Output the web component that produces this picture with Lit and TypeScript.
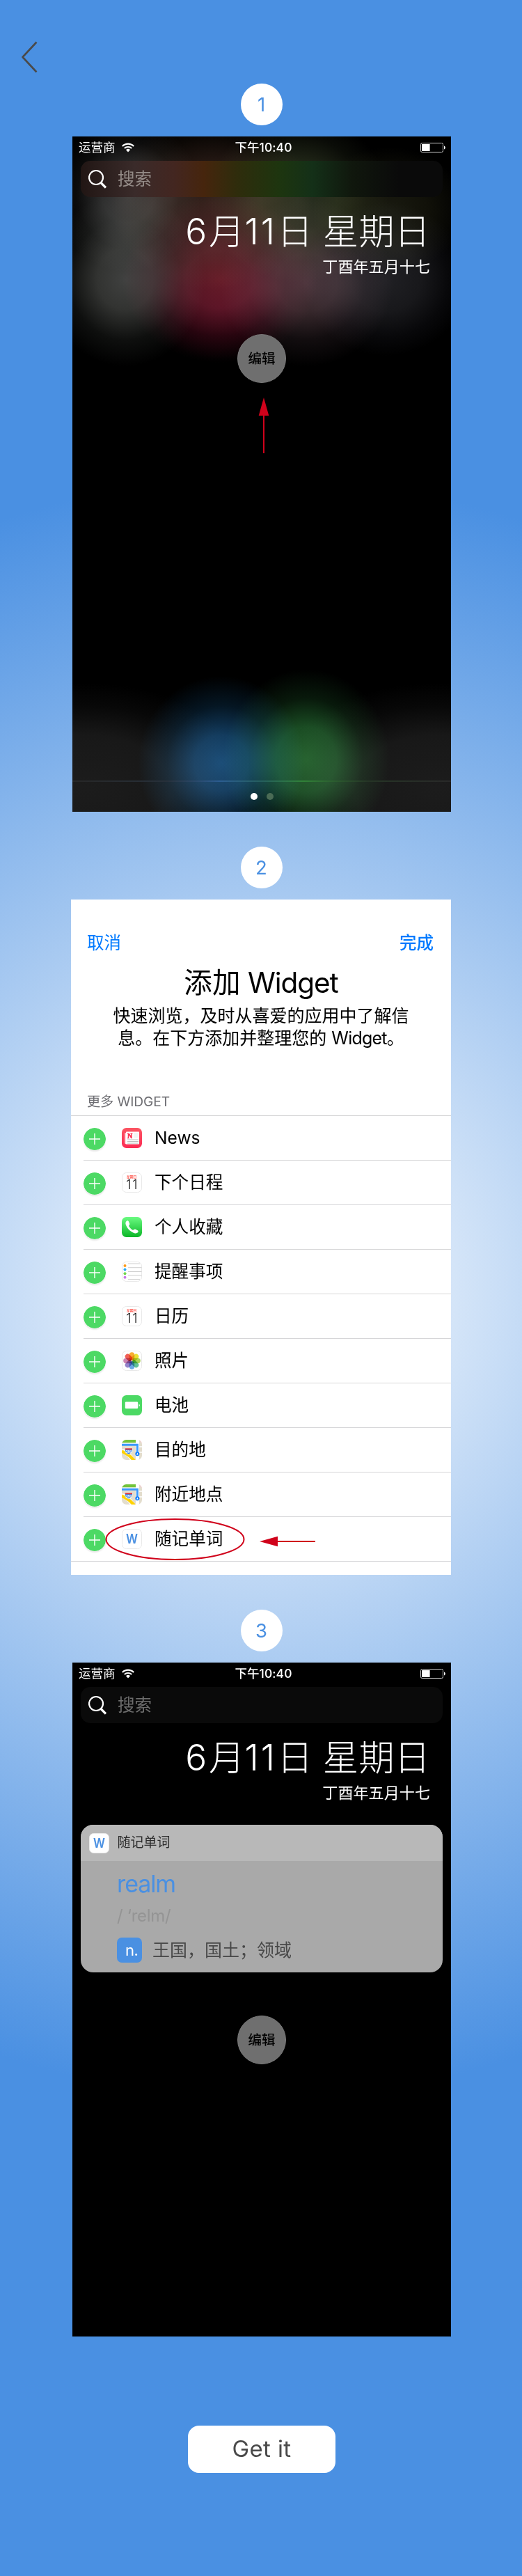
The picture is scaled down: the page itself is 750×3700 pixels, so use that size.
import { LitElement, html, css, svg, nothing } from "lit";
import { customElement, property } from "lit/decorators.js";

const textBase = css`
  :host {
    display: block;
    font-family: Inter, "Noto Sans CJK SC", sans-serif;
    box-sizing: border-box;
  }
  * {
    box-sizing: border-box;
  }
  svg {
    display: block;
    flex: none;
  }
`;

const calendarIcon = svg`
  <rect x=".5" y=".5" width="28" height="28" rx="6" fill="#fff" stroke="#e9e9e9"/>
  <text x="14.2" y="8.4" font-size="4.8" font-weight="500" text-anchor="middle" fill="#ff3b30" font-family="Noto Sans CJK SC, sans-serif">星期日</text>
  <text x="6.2" y="23.500" font-size="18.400" font-weight="300" textLength="16.200" fill="#111" font-family="Inter, sans-serif">11</text>`;

const mapIcon = svg`
  <clipPath id="tile"><rect width="29" height="29" rx="6.5"/></clipPath>
  <g clip-path="url(#tile)">
    <rect width="29" height="29" fill="#e3ddcd"/>
    <path d="M0 0h20v4.6H0z" fill="#72c43c"/>
    <path d="M20 0h5v29h-5z" fill="#fff"/>
    <path d="M25 0h4v5.5z" fill="#fbb8cc"/>
    <path d="M25 10h4M25 18h4" stroke="#fff" stroke-width="1.4"/>
    <path d="M0 4.6h24.5V6H0z" fill="#fff"/>
    <path d="M0 16c6 1.500 9 5 12 8l4 6" fill="none" stroke="#fff" stroke-width="6"/>
    <path d="M0 16.500c5 2 8 4.500 11.500 7L18 30" fill="none" stroke="#ffd200" stroke-width="4.400"/>
    <path d="M0 7.200h22.400V19" fill="none" stroke="#3b99fc" stroke-width="3"/>
    <path d="M4.600 12.400h10.600c.6 4-1 7-5.300 8.400-4.300-1.400-6-4.400-5.300-8.400z" fill="#2f7fe0" stroke="#fff" stroke-width=".8"/>
    <path d="M4.800 12.200h10.200v2H4.800z" fill="#e0393e"/>
    <text x="9.900" y="18.600" font-size="4.600" font-weight="700" text-anchor="middle" fill="#fff" font-family="Inter, sans-serif">280</text>
    <circle cx="22.400" cy="20.300" r="3" fill="#0a7bff"/>
    <path d="M22.400 18.500l1.300 3h-2.600z" fill="#fff"/>
  </g>`;

const petals = [
  ["#f7a21b", 0], ["#e8dd1c", 45], ["#a4cf46", 90], ["#4fb98c", 135],
  ["#5a9fe0", 180], ["#8a75c4", 225], ["#c877a9", 270], ["#ef4f45", 315],
] as const;

const wordIcon = svg`
  <rect x=".5" y=".5" width="28" height="28" rx="6" fill="#fff" stroke="#e9e9e9"/>
  <text x="6" y="20.700" font-size="19" font-weight="600" textLength="17" lengthAdjust="spacingAndGlyphs" fill="#4a90e2" font-family="Inter, sans-serif">W</text>`;

const icons: Record<string, unknown> = {
  news: svg`
    <defs><linearGradient id="nw" x2="0" y2="1"><stop stop-color="#fb5562"/><stop offset="1" stop-color="#fc2b53"/></linearGradient></defs>
    <rect width="29" height="29" rx="6.500" fill="url(#nw)"/>
    <path d="M4.300 7.200h3v16h-1.200c-1 0-1.800-.8-1.800-1.800z" fill="#ffdfe2"/>
    <rect x="6" y="5.500" width="19" height="18" rx=".8" fill="#fff"/>
    <text x="8" y="15.200" font-size="10" font-weight="900" fill="#fb2f50" stroke="#fb2f50" stroke-width=".6" font-family="Liberation Serif, serif">N</text>
    <path d="M17 7h7v7.500h-7z" fill="#f4f4f4"/>
    <path d="M8 17h16M8 19.500h16M8 22h16" stroke="#bdbdbd" stroke-width="1.100"/>`,
  calendar: calendarIcon,
  phone: svg`
    <defs><linearGradient id="ph" x2="0" y2="1"><stop stop-color="#6bfb82"/><stop offset="1" stop-color="#0bb627"/></linearGradient></defs>
    <rect width="29" height="29" rx="6.500" fill="url(#ph)"/>
    <path d="M7.300 5.400c1-.6 2-.1 2.500.9l1.300 2.900c.4.900.2 1.600-.4 2.300-.7.800-.7 1.400-.2 2.300 1 1.800 2.700 3.500 4.700 4.600.9.500 1.500.4 2.300-.3.700-.6 1.500-.7 2.300-.3l2.900 1.500c1 .5 1.300 1.500.6 2.500-1.100 1.500-3 2.100-5.200 1.400C12 21.200 7.300 16.300 5.600 10.600 5 8.400 5.600 6.500 7.300 5.400z" fill="#fff"/>`,
  reminders: svg`
    <rect x=".5" y=".5" width="28" height="28" rx="6" fill="#fff" stroke="#e9e9e9"/>
    <path d="M9 3h17M9 8.700h19.500M9 14.500h19.500M9 20h19.500M9 25.600h17" stroke="#cfcfcf"/>
    <circle cx="4.500" cy="5.900" r="2" fill="#ff9b1a"/><circle cx="4.500" cy="11.500" r="2" fill="#29aaf5"/>
    <circle cx="4.500" cy="17.300" r="2" fill="#70d54b"/><circle cx="4.500" cy="22.800" r="2" fill="#c978e8"/>`,
  photos: svg`
    <rect x=".5" y=".5" width="28" height="28" rx="6" fill="#fff" stroke="#e9e9e9"/>
    <g style="isolation:isolate">
      ${petals.map(([fill, angle]) => svg`<rect x="10.800" y="2.200" width="7.400" height="11.600" rx="3.700" fill=${fill} opacity=".9" style="mix-blend-mode:multiply" transform=${`rotate(${angle} 14.5 14.5)`}/>`)}
    </g>`,
  battery: svg`
    <rect width="29" height="29" rx="6.500" fill="#4cd964"/>
    <rect x="4.800" y="9.500" width="18.400" height="9.800" rx="1.300" fill="#fff"/>
    <path d="M24.600 12.700c1.800.4 1.800 3.200 0 3.600z" fill="#fff"/>`,
  maps: mapIcon,
  word: wordIcon,
};

@customElement("app-icon")
class AppIcon extends LitElement {
  @property() name = "word";
  static styles = css`
    :host { display: block; flex: none; width: 29px; height: 29px; }
    svg { display: block; }
  `;
  render() {
    return html`<svg width="29" height="29" viewBox="0 0 29 29">${icons[this.name]}</svg>`;
  }
}

@customElement("step-badge")
class StepBadge extends LitElement {
  @property() label = "";
  static styles = [textBase, css`
    :host {
      width: 60px; height: 60px; border-radius: 50%;
      background: #fff; color: #4a90e2;
      font-size: 27.5px; line-height: 61px; text-align: center;
      padding-right: 1px;
    }
  `];
  render() {
    return html`${this.label}`;
  }
}

@customElement("status-bar")
class StatusBar extends LitElement {
  static styles = [textBase, css`
    .bar {
      display: grid; grid-template-columns: 1fr auto 1fr; align-items: center;
      height: 30px; padding: 1px 8px 0 9px;
      color: #fff; font-size: 17.5px; line-height: 28px;
    }
    .left { display: flex; align-items: center; gap: 9px; }
    .time { font-weight: 500; letter-spacing: .05px; padding-left: 4px; }
    .right { display: flex; justify-content: flex-end; }
  `];
  render() {
    return html`<div class="bar">
      <div class="left">运营商
        <svg width="18" height="14" viewBox="0 0 18 14">
          <g fill="none" stroke="#fff" stroke-width="2.100">
            <path d="M.8 4.900a11.800 11.800 0 0 1 16.400 0"/>
            <path d="M3.800 8.100a7.500 7.500 0 0 1 10.400 0"/>
          </g>
          <path d="M9 13.600l-3-3.300a4.300 4.300 0 0 1 6 0z" fill="#fff"/>
        </svg>
      </div>
      <div class="time">下午10:40</div>
      <div class="right">
        <svg width="36" height="14" viewBox="0 0 36 14">
          <rect x=".5" y=".5" width="32" height="13" rx="2" fill="none" stroke="#cfcfcf"/>
          <rect x="2" y="2" width="11.600" height="10" rx=".5" fill="#fff"/>
          <path d="M34 4.500c2.400.8 2.400 4.200 0 5z" fill="#fff"/>
        </svg>
      </div>
    </div>`;
  }
}

@customElement("today-head")
class TodayHead extends LitElement {
  @property({ type: Boolean, reflect: true }) tinted = false;
  static styles = [textBase, css`
    .search {
      display: flex; align-items: center; gap: 16px;
      height: 52px; margin: 5px 12px 0; padding-left: 11px;
      border-radius: 14px; background: #0a0a0a; color: #6c6c6c;
      font-size: 24.5px; line-height: 52px;
    }
    :host([tinted]) .search {
      color: #948b87;
      background: linear-gradient(90deg, #211614 0, #3a2b2a 15%, #432620 26%, #46250d 34%, #2f2c0c 43%,
        #1d350f 55%, #143018 64%, #10170d 75%, #0a0a0a 88%);
    }
    .date, .lunar { text-align: right; padding-right: 30px; color: #fff; }
    .date { margin-top: 17px; font-size: 51.4px; line-height: 64px; font-weight: 300; white-space: nowrap; }
    .num { letter-spacing: 3px; }
    .lunar { margin-top: 4px; font-size: 22.1px; line-height: 31px; }
  `];
  render() {
    return html`
      <div class="search">
        <svg width="26" height="28" viewBox="0 0 26 28" fill="none" stroke="#fff">
          <circle cx="11" cy="12" r="10" stroke-width="2.200"/>
          <path d="M18 19.500l7 7" stroke-width="3.200"/>
        </svg>
        <span>搜索</span>
      </div>
      <div class="date"><span class="num">6</span>月<span class="num">11</span>日 星期日</div>
      <div class="lunar">丁酉年五月十七</div>`;
  }
}

@customElement("edit-button")
class EditButton extends LitElement {
  static styles = [textBase, css`
    :host {
      width: 70px; height: 70px; border-radius: 50%;
      background: #6f6f6f; color: #000; border: 1px solid #7b7b7b;
      font-size: 19.5px; font-weight: 500; line-height: 68px; text-align: center;
    }
  `];
  render() {
    return html`编辑`;
  }
}

@customElement("word-card")
class WordCard extends LitElement {
  static styles = [textBase, css`
    :host {
      height: 212px; margin: 0 12px; border-radius: 18px; overflow: hidden;
      background: #a9a9a9;
    }
    header {
      display: flex; align-items: center; gap: 12px;
      height: 52px; padding-left: 11.500px; background: #b8b8b8;
      color: #2c2c2c; font-size: 19px; line-height: 52px;
    }
    .body { padding: 15px 0 0 52px; }
    .word { color: #4a90e2; font-size: 34px; line-height: 36px; letter-spacing: -1.1px; }
    .sound { color: #949494; font-size: 24px; line-height: 32px; margin-top: 12px; letter-spacing: -.3px; }
    .meaning { display: flex; align-items: center; gap: 15px; margin-top: 15px; color: #484848; font-size: 25px; line-height: 36px; }
    .kind {
      width: 36px; height: 36px; border-radius: 7px; background: #4a90e2; color: #fff;
      font-size: 22px; line-height: 36px; padding-left: 12px; letter-spacing: -.6px;
    }
  `];
  render() {
    return html`
      <header><app-icon name="word"></app-icon><span>随记单词</span></header>
      <div class="body">
        <div class="word">realm</div>
        <div class="sound">/ ‘relm/</div>
        <div class="meaning"><span class="kind">n.</span><span>王国，国土；领域</span></div>
      </div>`;
  }
}

const widgets = [
  ["news", "News"], ["calendar", "下个日程"], ["phone", "个人收藏"], ["reminders", "提醒事项"],
  ["calendar", "日历"], ["photos", "照片"], ["battery", "电池"], ["maps", "目的地"],
  ["maps", "附近地点"], ["word", "随记单词"],
];

@customElement("widget-panel")
class WidgetPanel extends LitElement {
  static styles = [textBase, css`
    :host { width: 546px; height: 970px; background: #fff; color: #000; }
    nav {
      display: flex; justify-content: space-between; padding: 45px 25px 0 23px;
      color: #007aff; font-size: 24.5px; line-height: 34px;
    }
    .done { font-weight: 500; }
    h1 { margin: 13px 0 0; font-size: 40.5px; font-weight: 400; line-height: 56px; text-align: center; letter-spacing: -1.1px; }
    h1 span { letter-spacing: .2px; }
    p { margin: 3px 0 0; font-size: 25px; line-height: 32px; text-align: center; }
    .latin { letter-spacing: -.8px; }
    .caption { margin-top: 61px; padding: 0 0 8px 23px; height: 35px; font-size: 19.2px; line-height: 28px; color: #6d6d72; border-bottom: 1px solid #d3d3d5; letter-spacing: -.1px; }
    .list { border-bottom: 1px solid #d3d3d5; }
    .row {
      position: relative; display: flex; align-items: center; height: 64px; margin-left: 18px;
      border-bottom: 1px solid #d6d6d8; font-size: 24.6px; line-height: 60px;
    }
    .row:last-child { border-bottom: none; height: 63px; }
    .plus { margin: 3px 23px 0 0; border-radius: 50%; box-shadow: 0 2px 2px rgba(0, 0, 0, .09); }
    app-icon { margin-right: 18px; }
    .name { padding-bottom: 2px; }
    .mark { position: absolute; left: 31px; top: 1px; }
    .arrow { position: absolute; left: 253px; top: 27px; }
  `];
  render() {
    return html`
      <nav><span>取消</span><span class="done">完成</span></nav>
      <h1><span>添加</span> Widget</h1>
      <p>快速浏览，及时从喜爱的应用中了解信<br />息。在下方添加并整理您的 <span class="latin">Widget</span>。</p>
      <div class="caption">更多 WIDGET</div>
      <div class="list">
        ${widgets.map(([icon, name], i) => html`<div class="row">
          <svg class="plus" width="32" height="32" viewBox="0 0 32 32">
            <circle cx="16" cy="16" r="16" fill="#4cd964"/>
            <path d="M8 16h16M16 8v16" stroke="#fff" stroke-width="1.400"/>
          </svg>
          <app-icon name=${icon}></app-icon>
          <span class="name">${name}</span>
          ${i === widgets.length - 1 ? html`
            <svg class="mark" width="202" height="62" viewBox="0 0 202 62">
              <ellipse cx="100.500" cy="31" rx="99" ry="29" fill="none" stroke="#d0021b" stroke-width="2"/>
            </svg>
            <svg class="arrow" width="80" height="16" viewBox="0 0 80 16" fill="#d0021b">
              <path d="M0 8L26 .800v14.400zM25 7h55v2H25z"/>
            </svg>` : nothing}
        </div>`)}
      </div>`;
  }
}

@customElement("app-root")
class AppRoot extends LitElement {
  static styles = [textBase, css`
    :host {
      height: 3700px;
      background: radial-gradient(circle 1165px at 375px 1850px, #fff 0, #4a90e2 100%);
    }
    .page { display: flex; flex-direction: column; align-items: center; height: 100%; }
    .top { align-self: stretch; height: 120px; padding: 59px 0 0 31px; }
    .screen { width: 544px; margin-left: 2px; background: #000; display: flex; flex-direction: column; margin-top: 16px; }
    .screen > status-bar, .screen > today-head, .screen > word-card { align-self: stretch; }
    .first {
      height: 970px; margin-bottom: 50px; align-items: center;
      background-color: #000;
      background-blend-mode: screen;
      background-image:
        radial-gradient(ellipse 105px 110px at 80px 85px, #3b3a3a 0, #2d2d2d 35%, #0c0c0c 70%, #000 100%),
        radial-gradient(ellipse 115px 125px at 76px 205px, #404140 0, #323331 35%, #0e0f0e 70%, #000 100%),
        radial-gradient(ellipse 140px 120px at 212px 205px, #581b23 0, #45151e 35%, #18050a 68%, #000 100%),
        radial-gradient(ellipse 100px 75px at 212px 245px, #20000a 0, #140006 50%, #000 100%),
        radial-gradient(ellipse 125px 120px at 336px 210px, #48343a 0, #36272b 35%, #120d0f 68%, #000 100%),
        radial-gradient(ellipse 120px 110px at 450px 205px, #202024 0, #18181b 42%, #08080a 75%, #000 100%),
        radial-gradient(ellipse 145px 125px at 200px 95px, #34221c 0, #291b16 40%, #0c0805 75%, #000 100%),
        radial-gradient(ellipse 130px 120px at 325px 90px, #2b3122 0, #212718 42%, #0a0c07 75%, #000 100%),
        radial-gradient(ellipse 110px 90px at 455px 105px, #191a10 0, #111109 50%, #000 100%),
        radial-gradient(ellipse 120px 125px at 214px 900px, #174a75 0, #123b5e 32%, #051623 66%, #000 100%),
        radial-gradient(ellipse 120px 130px at 336px 895px, #225f2b 0, #1a4c23 36%, #08190b 68%, #000 100%),
        radial-gradient(ellipse 240px 150px at 20px 935px, #1c1c1c 0, #181818 50%, #080808 78%, #000 100%),
        radial-gradient(ellipse 240px 150px at 524px 935px, #1c1c1c 0, #181818 50%, #080808 78%, #000 100%);
    }
    .third { height: 968px; align-items: center; }
    .first edit-button { margin-top: 81px; }
    .up { margin-top: 21px; margin-left: 5px; }
    .dock {
      align-self: stretch; margin-top: auto; height: 45px; padding-top: 16px;
      display: flex; justify-content: center; gap: 13px;
      border-top: 2px solid;
      border-image: linear-gradient(90deg, #272727 0, #27303a 25%, #2c5d92 39%, #255f5d 50%, #318238 61%, #263526 78%, #292929 100%) 1;
    }
    .dot { width: 10px; height: 10px; border-radius: 50%; background: #fff; }
    .dim { background: #4a6b55; margin-right: -1px; }
    .panel { margin: 16px 0 50px; }
    .third word-card { margin-top: 30px; }
    .third edit-button { margin-top: 62px; }
    .go {
      margin: 128px 0 0 2px; width: 212px; height: 68px; border: none; border-radius: 16px;
      background: #fff; color: #4a4a4a; font: 400 33px/64px Inter, sans-serif; text-align: center;
      letter-spacing: .4px; padding: 0 0 3px;
    }
    step-badge { margin-left: 2px; }
  `];
  render() {
    return html`<div class="page">
      <div class="top">
        <svg width="24" height="48" viewBox="0 0 24 48" fill="none" stroke="#4a4a4a" stroke-width="2.600" stroke-linejoin="round">
          <path d="M21.500 1.500L1.500 23l20 21.500"/>
        </svg>
      </div>
      <step-badge label="1"></step-badge>
      <section class="screen first">
        <status-bar></status-bar>
        <today-head tinted></today-head>
        <edit-button></edit-button>
        <svg class="up" width="16" height="80" viewBox="0 0 16 80" fill="#d0021b">
          <path d="M8 0l7.300 26H.700zM7 25h2v55H7z"/>
        </svg>
        <div class="dock"><i class="dot"></i><i class="dot dim"></i></div>
      </section>
      <step-badge label="2"></step-badge>
      <widget-panel class="panel"></widget-panel>
      <step-badge label="3"></step-badge>
      <section class="screen third">
        <status-bar></status-bar>
        <today-head></today-head>
        <word-card></word-card>
        <edit-button></edit-button>
      </section>
      <button class="go">Get it</button>
    </div>`;
  }
}
